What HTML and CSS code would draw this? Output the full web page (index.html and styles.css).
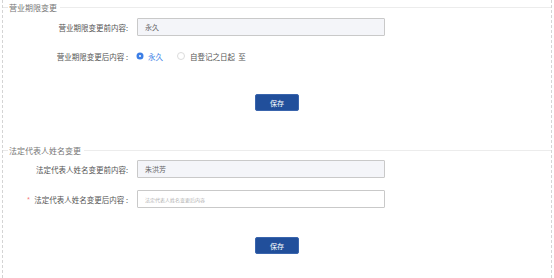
FILE: index.html
```html
<!DOCTYPE html>
<html>
<head>
    <title>变更信息</title>
    <link rel="stylesheet" href="styles.css">
</head>
<body>
    <div class="page">
        <div class="section">
            <div class="section-title"><span>营业期限变更</span></div>

            <div class="form-row">
                <label class="form-label">营业期限变更前内容:</label>
                <div class="form-input disabled">永久</div>
            </div>

            <div class="form-row">
                <label class="form-label">营业期限变更后内容 :</label>
                <div class="radio-group">
                    <span class="radio checked"><i></i>永久</span>
                    <span class="radio"><i></i>自登记之日起&nbsp;&nbsp;至</span>
                </div>
            </div>

            <div class="button-container">
                <button>保存</button>
            </div>
        </div>

        <div class="section second">
            <div class="section-title"><span>法定代表人姓名变更</span></div>

            <div class="form-row">
                <label class="form-label">法定代表人姓名变更前内容:</label>
                <div class="form-input disabled">朱洪芳</div>
            </div>

            <div class="form-row">
                <label class="form-label"><em>*</em>法定代表人姓名变更后内容 :</label>
                <input class="form-input" type="text" placeholder="法定代表人姓名变更后内容">
            </div>

            <div class="button-container">
                <button>保存</button>
            </div>
        </div>
    </div>
</body>
</html>
```

FILE: styles.css
```css
body {
    margin: 0;
    background: #fff;
    font-family: "Noto Sans CJK SC", "Noto Sans", sans-serif;
    color: #555;
}
.page {
    margin-left: 2px;
    width: 550px;
    height: 278px;
    border-left: 1px dashed #d4d4d4;
    border-right: 1px dashed #d4d4d4;
    box-sizing: border-box;
}
.section-title {
    display: flex;
    align-items: center;
    height: 14px;
    font-size: 8px;
    color: #777;
}
.section-title::before {
    content: "";
    width: 5px;
    border-top: 1px solid #e8e8e8;
}
.section-title::after {
    content: "";
    flex: 1;
    border-top: 1px solid #ececec;
    margin-left: 3px;
}
.section-title span {
    padding-left: 1px;
}
.second {
    margin-top: 32px;
}
.form-row {
    display: flex;
    align-items: center;
    height: 18px;
    margin-top: 4px;
}
.form-row + .form-row {
    margin-top: 11px;
}
.second .form-row {
    margin-top: 3px;
}
.second .form-row + .form-row {
    margin-top: 12px;
}
.form-label {
    width: 125px;
    text-align: right;
    font-size: 7.5px;
    color: #555;
    margin-right: 9px;
    white-space: nowrap;
}
.form-label em {
    font-style: normal;
    color: #f57c7c;
    margin-right: 4px;
}
.form-input {
    width: 248px;
    height: 18px;
    box-sizing: border-box;
    border: 1px solid #c9c9c9;
    border-radius: 1px;
    padding: 0 7px;
    font-size: 7px;
    line-height: 16px;
    color: #666;
    font-family: inherit;
    outline: none;
    margin: 0;
}
.form-input.disabled {
    background: #f4f5f9;
}
.form-input::placeholder {
    font-size: 5px;
    color: #b0b0b0;
}
.radio-group {
    display: flex;
    align-items: center;
    font-size: 7.5px;
}
.radio {
    display: flex;
    align-items: center;
    margin-right: 14px;
    color: #555;
}
.radio i {
    width: 6px;
    height: 6px;
    border: 1px solid #dcdcdc;
    border-radius: 50%;
    margin-right: 5px;
}
.radio.checked {
    color: #3d7fe6;
}
.radio.checked i {
    border: 2px solid #3d7fe6;
    width: 2px;
    height: 2px;
    background: #fff;
    box-shadow: 0 0 0 0.5px #3d7fe6;
}
.button-container {
    display: flex;
    justify-content: center;
    margin-top: 29px;
}
button {
    width: 44px;
    height: 17px;
    padding: 0;
    background-color: #214f9b;
    color: #fff;
    border: 1px solid #3a65ad;
    border-radius: 2px;
    font-size: 7px;
    font-family: inherit;
    cursor: pointer;
}
```
